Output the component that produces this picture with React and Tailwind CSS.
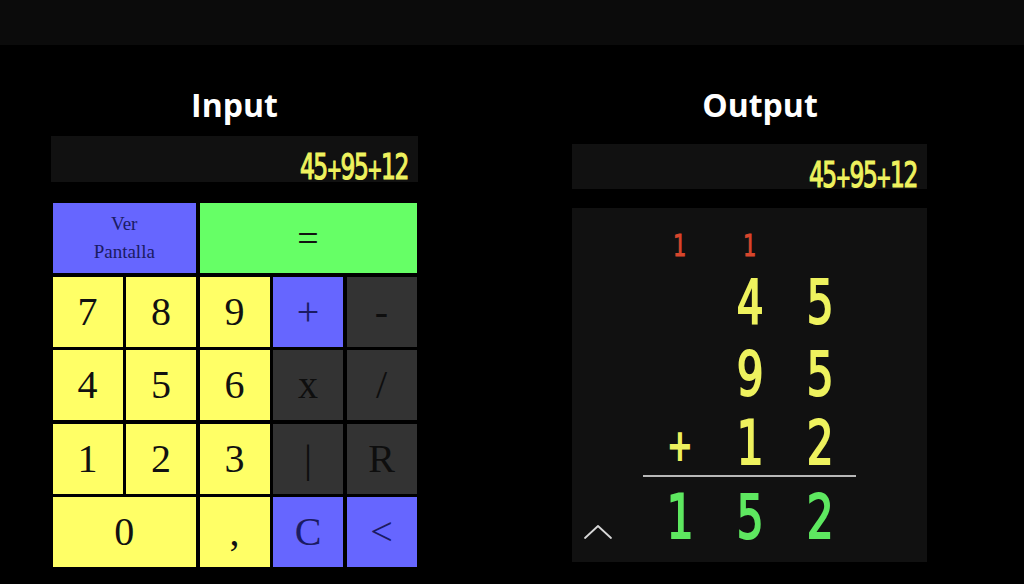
import React from "react";

const narrow = '[font-family:"DejaVu_Sans_Condensed","DejaVu_Sans",sans-serif]';

function Key({ children, color, span, size }) {
  const bg =
    color === "y" ? "bg-[#ffff66]" : color === "b" ? "bg-[#6666ff]" : color === "g" ? "bg-[#66ff66]" : "bg-[#333333]";
  const tc = color === "b" ? "text-[#1b1b63]" : color === "d" ? "text-[#0e0e0e]" : "text-[#111111]";
  return (
    <div
      className={`${bg} ${tc} ${span ? (span === 3 ? "col-span-3" : "col-span-2") : ""} flex items-center justify-center ${
        size || "text-[40px]"
      } leading-none [font-family:"Liberation_Serif","Times_New_Roman",serif]`}
    >
      {children}
    </div>
  );
}

function Cell({ children, className }) {
  return (
    <div className={`flex items-center justify-center ${className || ""}`}>
      <span className="inline-block scale-x-[0.78]">{children}</span>
    </div>
  );
}

function Expr() {
  return (
    <span
      className={`inline-block origin-right scale-x-[0.72] tracking-[-2px] pt-[16px] leading-[30px] text-[36px] text-[#eef25e] [-webkit-text-stroke:1.2px_#eef25e] ${narrow}`}
    >
      45<span className="text-[28px]">+</span>95<span className="text-[28px]">+</span>12
    </span>
  );
}

export default function App() {
  return (
    <div className="w-[1024px] h-[584px] bg-black overflow-hidden flex flex-col">
      <div className="h-[45px] bg-[#0b0b0b] shrink-0" />
      <div className="flex flex-row mt-[40px]">
        {/* Input column */}
        <div className="ml-[51px] w-[367px] flex flex-col">
          <div className='h-[40px] leading-[40px] text-center text-white text-[32px] font-bold [font-family:"Open_Sans",sans-serif]'>
            Input
          </div>
          <div className="mt-[11px] h-[46px] bg-[#111111] flex justify-end pr-[10px] overflow-visible">
            <Expr />
          </div>
          <div className="mt-[21px] mx-auto w-[364px] grid grid-cols-5 auto-rows-[70px] gap-[3.5px]">
            <Key color="b" span={2} size="text-[19px]">
              <div className="text-center leading-[28px]">
                Ver
                <br />
                Pantalla
              </div>
            </Key>
            <Key color="g" span={3} size="text-[38px]">
              =
            </Key>
            <Key color="y">7</Key>
            <Key color="y">8</Key>
            <Key color="y">9</Key>
            <Key color="b">+</Key>
            <Key color="d">-</Key>
            <Key color="y">4</Key>
            <Key color="y">5</Key>
            <Key color="y">6</Key>
            <Key color="d">x</Key>
            <Key color="d">/</Key>
            <Key color="y">1</Key>
            <Key color="y">2</Key>
            <Key color="y">3</Key>
            <Key color="d">|</Key>
            <Key color="d">R</Key>
            <Key color="y" span={2}>
              0
            </Key>
            <Key color="y">,</Key>
            <Key color="b">C</Key>
            <Key color="b">&lt;</Key>
          </div>
        </div>

        {/* Output column */}
        <div className="ml-[154px] w-[355px] flex flex-col">
          <div className='h-[40px] leading-[40px] text-center pl-[21px] text-white text-[32px] font-bold [font-family:"Open_Sans",sans-serif]'>
            Output
          </div>
          <div className="mt-[19px] h-[45px] bg-[#111111] flex justify-end pr-[10px] overflow-visible">
            <Expr />
          </div>
          <div className={`relative mt-[19px] h-[354px] bg-[#111111] ${narrow}`}>
            <div className="pt-[18px] pl-[73px]">
              <div className="grid grid-cols-[70px_70px_70px] h-[40px] text-[30px] leading-none text-[#d8462c] [-webkit-text-stroke:0.8px_#d8462c]">
                <Cell>1</Cell>
                <Cell>1</Cell>
                <Cell></Cell>
              </div>
              <div className="grid grid-cols-[70px_70px_70px] h-[72px] text-[60px] leading-none text-[#eef25e] [-webkit-text-stroke:2px_#eef25e]">
                <Cell></Cell>
                <Cell>4</Cell>
                <Cell>5</Cell>
              </div>
              <div className="grid grid-cols-[70px_70px_70px] h-[72px] text-[60px] leading-none text-[#eef25e] [-webkit-text-stroke:2px_#eef25e]">
                <Cell></Cell>
                <Cell>9</Cell>
                <Cell>5</Cell>
              </div>
              <div className="grid grid-cols-[70px_70px_70px] h-[65px] text-[60px] leading-none text-[#eef25e] [-webkit-text-stroke:2px_#eef25e]">
                <Cell className="text-[42px] pt-[6px]">+</Cell>
                <Cell>1</Cell>
                <Cell>2</Cell>
              </div>
            </div>
            <div className="ml-[71px] w-[213px] h-[2px] bg-[#b8b8b8]" />
            <div className="pl-[73px] mt-[4px]">
              <div className="grid grid-cols-[70px_70px_70px] h-[72px] text-[60px] leading-none text-[#5ee860] [-webkit-text-stroke:2px_#5ee860]">
                <Cell>1</Cell>
                <Cell>5</Cell>
                <Cell>2</Cell>
              </div>
            </div>
            <svg
              className="absolute left-[11px] top-[313px]"
              width="30"
              height="20"
              viewBox="0 0 30 20"
              fill="none"
            >
              <path d="M2 17 L15 5 L28 17" stroke="#d8d8d8" strokeWidth="1.8" strokeLinecap="round" strokeLinejoin="round" />
            </svg>
          </div>
        </div>
      </div>
    </div>
  );
}
